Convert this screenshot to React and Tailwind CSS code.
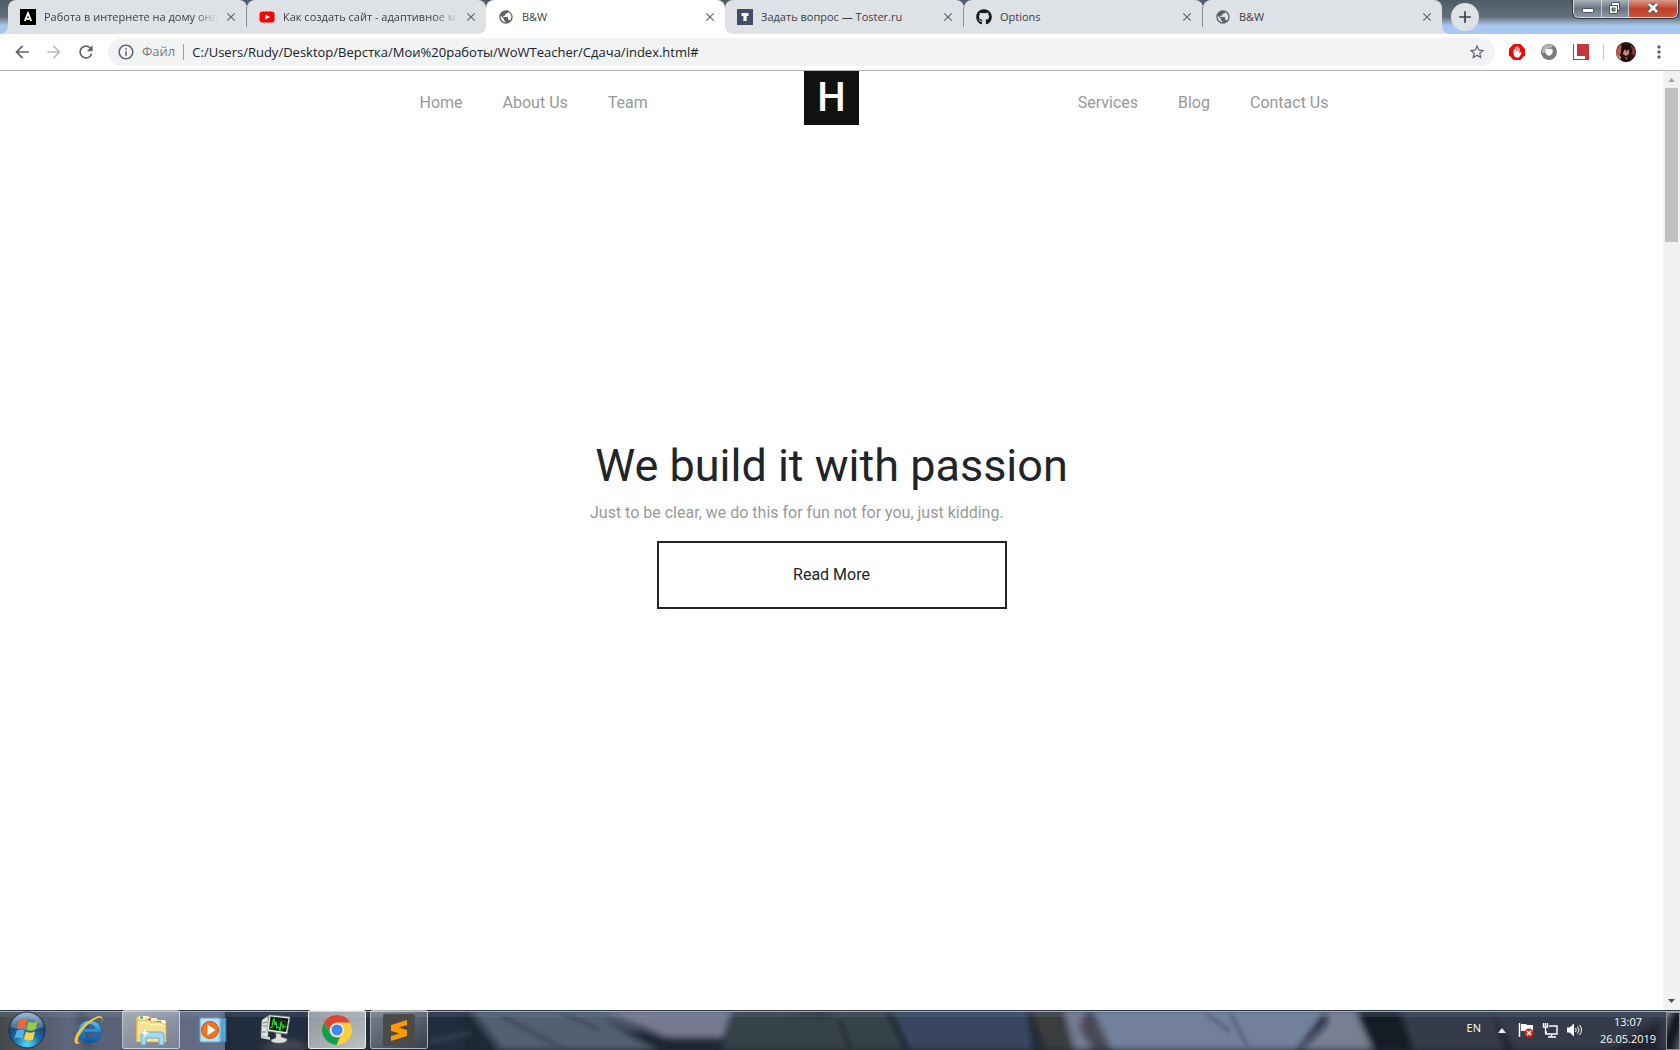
import {
  MdAdd,
  MdArrowBack,
  MdArrowForward,
  MdClose,
  MdInfoOutline,
  MdMoreVert,
  MdPublic,
  MdRefresh,
  MdStarBorder,
} from "react-icons/md";
import { FaGithub } from "react-icons/fa";

const tabs = [
  { id: 1, title: "Работа в интернете на дому онл", icon: "author", line: true, fade: true },
  { id: 2, title: "Как создать сайт - адаптивное м", icon: "youtube", corner: "rounded-br-lg", fade: true },
  { id: 3, title: "B&W", icon: "globe", active: true },
  { id: 4, title: "Задать вопрос — Toster.ru", icon: "toster", corner: "rounded-bl-lg", line: true },
  { id: 5, title: "Options", icon: "github", line: true },
  { id: 6, title: "B&W", icon: "globe" },
];

const leftLinks = ["Home", "About Us", "Team"];
const rightLinks = ["Services", "Blog", "Contact Us"];

function Favicon({ name }) {
  if (name === "globe") return <MdPublic className="size-4 text-[#5f6368]" />;
  if (name === "github") return <FaGithub className="size-4 text-[#191717]" />;
  if (name === "youtube") {
    return (
      <svg viewBox="0 0 16 16" className="size-4">
        <rect x="0.5" y="2.5" width="15" height="11" rx="3" fill="#f00" />
        <path d="M6.3 5.4 11 8l-4.7 2.6z" fill="#fff" />
      </svg>
    );
  }
  if (name === "toster") {
    return (
      <svg viewBox="0 0 16 16" className="size-4">
        <rect width="16" height="16" fill="#454a67" />
        <path d="M4.5 4h7v3H9.7v5H6.4V7H4.5z" fill="#fff" />
      </svg>
    );
  }
  return (
    <svg viewBox="0 0 16 16" className="size-4">
      <rect width="16" height="16" fill="#000" />
      <path d="M4.8 12 8 4.2l3.2 7.8M5.8 9.8h4.4" fill="none" stroke="#fff" strokeWidth="1.8" />
    </svg>
  );
}

function Tab({ tab }) {
  return (
    <div
      className={`h-full min-w-0 flex-1 max-w-[239px] ${
        tab.corner ? "bg-linear-to-b from-transparent from-50% to-white to-50%" : ""
      }`}
    >
      <div
        className={`flex h-full items-center rounded-t-lg pl-3 ${
          tab.active ? "bg-white" : "bg-[#dee1e6]"
        } ${tab.corner || ""}`}
      >
        <button className="flex flex-1 min-w-0 items-center gap-2 text-left">
          <span className="shrink-0">
            <Favicon name={tab.icon} />
          </span>
          <span
            className={`flex-1 overflow-hidden whitespace-nowrap text-[11px] leading-4 text-[#3c4043] ${
              tab.fade ? "[mask-image:linear-gradient(to_right,#000_86%,transparent)]" : ""
            }`}
          >
            {tab.title}
          </span>
        </button>
        <button aria-label="Close tab" className="pl-[6px] pr-2 text-[#5f6368]">
          <MdClose className="size-[14px]" />
        </button>
        {tab.line && <span className="h-5 w-px bg-[#8a8f95]" />}
      </div>
    </div>
  );
}

function WindowButtons() {
  return (
    <div className="flex h-[18px] mr-[2px] rounded-b-md overflow-hidden border border-t-0 border-[#d5dbe2] shadow-[0_0_0_1px_#2f3640]">
      <button
        aria-label="Minimize"
        className="w-7 border-r border-[#c5ccd4] bg-linear-to-b from-[#aab2bb] via-[#6c7681] to-[#8d98a6]"
      >
        <svg viewBox="0 0 28 17" className="w-7 h-[17px]">
          <rect x="8.5" y="8.5" width="11" height="4" rx="1" fill="#fff" stroke="#4b5060" />
        </svg>
      </button>
      <button
        aria-label="Restore"
        className="w-[27px] border-r border-[#c5ccd4] bg-linear-to-b from-[#aab2bb] via-[#6c7681] to-[#8d98a6]"
      >
        <svg viewBox="0 0 26 17" className="w-[26px] h-[17px]">
          <path d="M9.500 2.500h8v8h-8z" fill="#fff" stroke="#4b5060" />
          <path d="M7.500 5.500h8v8h-8z" fill="#fff" stroke="#4b5060" />
          <path d="M10 8h3v3h-3z" fill="#8d98a6" stroke="#4b5060" />
        </svg>
      </button>
      <button aria-label="Close" className="w-12 bg-linear-to-b from-[#d99a8c] via-[#c1402a] to-[#c8543a]">
        <svg viewBox="0 0 48 17" className="w-12 h-[17px]">
          <path d="m20 4 8 8m0-8-8 8" stroke="#4b5060" strokeWidth="4.6" />
          <path d="m20 4 8 8m0-8-8 8" stroke="#fff" strokeWidth="2.8" />
        </svg>
      </button>
    </div>
  );
}

function TabStrip() {
  return (
    <div className="flex h-[34px] items-start bg-linear-to-b from-[#4f5b66] from-0% via-[#647079] via-50% to-[#a9c8f0] to-75%">
      <svg viewBox="0 0 8 8" className="size-2 shrink-0 self-end">
        <path d="M8 0v8H0a8 8 0 0 0 8-8z" fill="#dee1e6" />
      </svg>
      <div className="flex h-full min-w-0 flex-1">
        {tabs.map((tab) => (
          <Tab key={tab.id} tab={tab} />
        ))}
        <svg viewBox="0 0 8 8" className="size-2 shrink-0 self-end">
          <path d="M0 0v8h8a8 8 0 0 1-8-8z" fill="#dee1e6" />
        </svg>
        <button
          aria-label="New tab"
          className="mt-[3px] ml-px size-7 shrink-0 rounded-full bg-[#dee1e6] flex items-center justify-center text-[#3c4043]"
        >
          <MdAdd className="size-5" />
        </button>
      </div>
      <WindowButtons />
    </div>
  );
}

function Toolbar() {
  return (
    <div className="flex h-[37px] items-center border-b border-[#b3b3b3] bg-white pl-3 pr-[11px] text-[#5f6368]">
      <div className="flex items-center gap-3">
        <button aria-label="Back">
          <MdArrowBack className="size-5" />
        </button>
        <button aria-label="Forward" className="text-[#babcbe]">
          <MdArrowForward className="size-5" />
        </button>
        <button aria-label="Reload">
          <MdRefresh className="size-5" />
        </button>
      </div>
      <div className="ml-3 flex h-7 flex-1 items-center rounded-full bg-[#f1f3f4] px-[9px]">
        <MdInfoOutline className="size-[18px]" />
        <label htmlFor="address" className="ml-[7px] text-[13px] text-[#777b80]">
          Файл
        </label>
        <span className="mx-2 h-4 w-px bg-[#9aa0a6]" />
        <input
          id="address"
          className="flex-1 bg-transparent text-[13px] leading-5 text-[#202124] outline-none"
          defaultValue="C:/Users/Rudy/Desktop/Верстка/Мои%20работы/WoWTeacher/Сдача/index.html#"
        />
        <button aria-label="Bookmark">
          <MdStarBorder className="size-[18px]" />
        </button>
      </div>
      <div className="ml-[14px] flex items-center gap-4">
        <button aria-label="AdBlock">
          <svg viewBox="0 0 16 16" className="size-4">
            <path d="M4.7 0h6.6L16 4.7v6.6L11.3 16H4.7L0 11.3V4.7z" fill="#e40d0d" />
            <path
              d="M4.6 6.2v3.4c0 2.6 1.5 4 3.6 4 1.8 0 2.7-1 3.4-2.6l1-2.6-.9-.3-1.2 1.5V3.6H9.4v3.8h-.5V2.3H7.7v5.1h-.5V3.2H6.1v4.4h-.4V5H4.6z"
              fill="#fff"
            />
          </svg>
        </button>
        <button aria-label="Browser proxy">
          <svg viewBox="0 0 16 16" className="size-4">
            <circle cx="8" cy="8" r="8" fill="#7b7b7b" />
            <path d="M1 9A7 7 0 0 1 12 2L9 4.5a4 4 0 0 0-5 4z" fill="#b5b5b5" />
            <path d="M8 12C4 10.500 3.600 7 5 4.500c1 .8 2 .8 3 .2 1 .6 2 .6 3-.2 1.400 2.500 1 6-3 7.500z" fill="#fff" />
          </svg>
        </button>
        <button aria-label="Bookmarks manager">
          <svg viewBox="0 0 16 16" className="size-4">
            <rect width="16" height="16" fill="#c5353a" />
            <path d="M1 0h3v12h8v3H1z" fill="#fff" />
          </svg>
        </button>
      </div>
      <span className="ml-[14px] h-4 w-px bg-[#c8cacc]" />
      <button aria-label="Profile" className="ml-3">
        <svg viewBox="0 0 20 20" className="size-5">
          <clipPath id="avatar">
            <circle cx="10" cy="10" r="10" />
          </clipPath>
          <g clipPath="url(#avatar)">
            <rect width="20" height="20" fill="#2a1416" />
            <path d="M0 8 5 2l1 6-3 7-3 1z" fill="#b5603f" />
            <path d="m15 3 5 5-2 6-3-3z" fill="#8a2f2c" />
            <path d="M7 6q3-3 6 0v6l-3 2-3-2z" fill="#c08a76" />
            <path d="M5 10Q5 2 11 3t5 9l-2-3-2-2-1 3-2-3-2 4z" fill="#1c0b10" />
            <path d="m5 20 3-6 2 2 3-2 3 6z" fill="#15090d" />
            <path d="m9 15 1 4 2-4z" fill="#c42329" />
            <path d="m2 13 3 2-1 3z" fill="#e2b49b" />
          </g>
        </svg>
      </button>
      <button aria-label="Menu" className="ml-[13px]">
        <MdMoreVert className="size-5" />
      </button>
    </div>
  );
}

function Site() {
  return (
    <main className="flex flex-1 flex-col bg-white font-['Roboto',sans-serif] text-base text-[#212529]">
      <header className="mx-auto grid w-full max-w-[1140px] grid-cols-[1fr_auto_1fr] text-[#999]">
        <nav className="flex items-center gap-10 pl-[158px] pt-[10px]">
          {leftLinks.map((link) => (
            <a key={link} href="#">
              {link}
            </a>
          ))}
        </nav>
        <a
          href="#"
          className="flex h-[54px] w-[55px] items-center justify-center bg-[#111] text-[40px] leading-none font-medium text-white"
        >
          H
        </a>
        <nav className="flex items-center justify-end gap-10 pr-[73px] pt-[10px]">
          {rightLinks.map((link) => (
            <a key={link} href="#">
              {link}
            </a>
          ))}
        </nav>
      </header>

      <section className="flex flex-1 items-center justify-center pb-[88px]">
        <div className="w-[483px]">
          <h1 className="text-center text-[45px] leading-[54px] whitespace-nowrap">We build it with passion</h1>
          <p className="mt-2 leading-6 text-[#999]">
            Just to be clear, we do this for fun not for you, just kidding.
          </p>
          <button className="mx-auto mt-4 block h-[68px] w-[350px] border-2 border-[#212529]">
            Read More
          </button>
        </div>
      </section>
    </main>
  );
}

function Scrollbar() {
  return (
    <div className="flex w-[17px] flex-col items-center bg-[#f1f1f1]">
      <svg viewBox="0 0 17 17" className="size-[17px]">
        <path d="m5 11 3.5-4L12 11z" fill="#a3a3a3" />
      </svg>
      <div className="h-[154px] w-[13px] bg-[#c1c1c1]" />
      <svg viewBox="0 0 17 17" className="mt-auto size-[17px]">
        <path d="m5 6 3.5 4L12 6z" fill="#505050" />
      </svg>
    </div>
  );
}

/* Blurred desktop wallpaper seen through the taskbar glass */
function Wallpaper() {
  return (
    <svg viewBox="0 0 1680 40" preserveAspectRatio="none" className="absolute inset-0 size-full">
      <defs>
        <filter id="soft" x="-5%" y="-20%" width="110%" height="140%">
          <feGaussianBlur stdDeviation="3" />
        </filter>
        <filter id="glass" x="0" y="0" width="1" height="1">
          <feGaussianBlur stdDeviation="2" />
        </filter>
        <linearGradient id="left" x1="0" x2="1">
          <stop offset="0" stopColor="#45484a" />
          <stop offset="0.1" stopColor="#4f5359" />
          <stop offset="0.3" stopColor="#5d667c" />
          <stop offset="0.5" stopColor="#596174" />
          <stop offset="1" stopColor="#66708a" />
        </linearGradient>
      </defs>
      <rect width="1680" height="40" fill="#1e2936" />
      <rect width="225" height="40" fill="url(#left)" />
      <g filter="url(#soft)">
        <path d="M76 0h10l8 40H84z" fill="#4a5160" />
        <path d="m225 0 6 40h230V0z" fill="#222d3d" />
        <path d="M260 40q30-20 50 0z" fill="#4b4a54" />
        <path d="M470 0h130l80 40H500z" fill="#536070" />
        <path d="M600 0h133l-10 28h-55z" fill="#777a8f" />
        <path d="m600 6 30 14 40 7h50l-2 13h-60l-25-12z" fill="#1f2634" />
        <path d="M735 0h150l20 40H722z" fill="#34424a" />
        <path d="m780 0 40 8 20-8z" fill="#222e36" />
        <path d="m890 0 18 40h125L1027 0z" fill="#37475f" />
        <path d="m1027 0 16 40h30L1064 0z" fill="#3b3e3c" />
        <path d="m1064 0 10 40h34L1085 0z" fill="#737c90" />
        <path d="m1085 0-6 18 14 22h20L1090 0z" fill="#4a4957" />
        <path d="m1092 0 20 40h185l30-40z" fill="#72809a" />
        <path d="m1300 40 27-26V0h28l18 40z" fill="#787f90" />
        <path d="m1355 0 18 40h42l-14-40z" fill="#141c25" />
        <path d="m1400 0 14 40h270V0z" fill="#363b48" />
        <path d="m1490 0 25 40h-10zm120 40 50-30v30z" fill="#20242e" />
      </g>
      <g fill="none" strokeWidth="3" filter="url(#glass)">
        <path d="m470 0 30 40M500 5l65 35M560 2l40 18M430 32l40-9" stroke="#3a4452" />
        <path d="m1205 2 25 20M1230 3l18 35M1326 0l1 14-25 24" stroke="#545d76" />
        <path d="m840 12 10 25M888 0l20 40M1028 0l16 40" stroke="#20272f" />
      </g>
      <rect y="2" width="1680" height="5" fill="#8fa8c8" opacity="0.15" />
      <rect width="1680" height="1" fill="#2b3744" />
      <rect y="1" width="1680" height="1" fill="#a1b1c2" />
    </svg>
  );
}

function StartOrb() {
  return (
    <svg viewBox="0 0 38 38" className="size-[38px]">
      <defs>
        <radialGradient id="orb" cx="0.5" cy="0.9" r="0.9">
          <stop offset="0" stopColor="#4fd8ff" />
          <stop offset="0.4" stopColor="#1d6ea6" />
          <stop offset="0.7" stopColor="#1b4472" />
          <stop offset="1" stopColor="#a9c4dc" />
        </radialGradient>
      </defs>
      <circle cx="19" cy="19" r="18" fill="url(#orb)" stroke="#152c48" />
      <path d="M3 16a16.5 16.5 0 0 1 32 0q-16 6-32 0z" fill="#fff" opacity="0.25" />
      <path d="M11 10q4-3 8-.5L17 18q-4-2-8 0z" fill="#ee6a32" />
      <path d="M20.5 10.500q4 2.500 9-.5l-2 8.500q-5 2.500-9 0z" fill="#9acb3c" />
      <path d="M8.500 20q4-2.500 8-.5l-2 8q-4-2-8 0z" fill="#57aee8" />
      <path d="M18 20.500q4 2.500 9 0l-2 8q-5 2.500-9-.5z" fill="#ffd23e" />
    </svg>
  );
}

function ExplorerE() {
  return (
    <svg viewBox="0 0 32 32" className="size-8">
      <defs>
        <linearGradient id="ie" x1="0" x2="0" y1="0" y2="1">
          <stop offset="0" stopColor="#6cc4f2" />
          <stop offset="0.5" stopColor="#1f86d4" />
          <stop offset="1" stopColor="#0a4f9c" />
        </linearGradient>
      </defs>
      <path
        d="M28.5 18.500H11.500c.5 3.500 2.500 5 5.500 5 2 0 3.500-.8 4.500-2.200h6.500c-1.800 5-6 7.700-11.200 7.700C10 29 5 24.500 5 17.800S10 6.500 17 6.500s12 5 11.500 12zM22 14.500c-.5-2.500-2.200-4-5-4s-4.700 1.500-5.200 4z"
        fill="url(#ie)"
        stroke="#135a9c"
        strokeWidth="0.6"
      />
      <path
        d="M28.500 9C31 4 29 .8 24 2.500 14 6 3 17 1.500 25.500c-.7 4 2 5.500 6.500 3.200-3 .6-4-1-3-4C7.500 17 17 7 25 4c3.500-1.200 5 .5 3.500 5z"
        fill="#f8c62d"
      />
    </svg>
  );
}

function FolderIcon() {
  return (
    <svg viewBox="0 0 32 32" className="size-8">
      <path d="M1 4q0-1 1-1h13l2 3h14v22H1z" fill="#e6c763" />
      <path d="M4 2h9l2 2h-4v2H3z" fill="#fdf6d8" />
      <path d="M12 4h9l2 2h-4v2h-7z" fill="#fdf6d8" />
      <path d="M20 6h9l2 2v2H20z" fill="#fdf6d8" />
      <path d="M5 2.500h3v2H5z" fill="#3aa530" />
      <path d="M13 4.500h3v2h-3z" fill="#dd3c2e" />
      <path d="M21 7h5v2h-5z" fill="#3b84d4" />
      <path d="M2 6h12l2 2h9l2 2h4v18H2z" fill="#f5e394" stroke="#c9a94c" strokeWidth="0.7" />
      <path d="M4 9h10M15 11h14" stroke="#fff8cc" />
      <path d="M6 31V21q0-3 3-3h17q3 0 3 3v10h-5v-7H11v7z" fill="#a5dbf2" stroke="#5a9cc4" strokeWidth="0.8" />
      <path d="m10 14 1 4 4 1-4 1-1 4-1-4-4-1 4-1z" fill="#fff" />
    </svg>
  );
}

function MediaPlayer() {
  return (
    <svg viewBox="0 0 32 32" className="size-8">
      <path d="M10 4h19v24H10z" fill="#5fa8d6" stroke="#2e729f" />
      <path d="M7 4h18v24H7z" fill="#87c4e8" stroke="#4b8ab3" />
      <path d="M3 4h18l2 1v23H3z" fill="#b7dff5" stroke="#6ba7cc" />
      <circle cx="13" cy="16" r="8.500" fill="#ee7420" stroke="#c95410" />
      <path d="m10.500 10.500 8 5.500-8 5.500z" fill="#fff" />
    </svg>
  );
}

function PerfMonitor() {
  return (
    <svg viewBox="0 0 32 32" className="size-8">
      <path d="m3 6 6-4v21l-7-1z" fill="#e2e3e1" stroke="#8d908e" strokeWidth="0.6" />
      <path d="M4 9l4-1M4 12h4M3 18h4" stroke="#767b78" />
      <path d="m10 1 21 2-3 17-20-3z" fill="#eceee9" stroke="#8d908e" strokeWidth="0.7" />
      <path d="m11.500 2.500 18 2-2.500 13.500-17-2.500z" fill="#0c220f" />
      <path d="M11 9l18 2M12 6l17 2M16 4l-2 12M22 5l-2 12" stroke="#1a6b22" strokeWidth="0.5" />
      <path d="m11 14 2-1 1-6 1-2 1 6 1-3 1 6 2-1 1 4 1-9 2 6 1-2 2 1" fill="none" stroke="#2fd234" strokeWidth="1.2" />
      <path d="m17 19 5 1v3l6 2q0 4-8 4t-8-3l5-2z" fill="#dadcd8" stroke="#9a9c99" strokeWidth="0.5" />
      <path d="m2 22 9 1v3l-9-2z" fill="#d1d3cf" />
    </svg>
  );
}

function ChromeIcon() {
  return (
    <svg viewBox="0 0 32 32" className="size-8">
      <circle cx="16" cy="16" r="15" fill="#ffcd40" />
      <path d="M3 8.500A15 15 0 0 1 29 8.500H16A7.500 7.500 0 0 0 9.500 19.700z" fill="#db4437" />
      <path d="M3 8.500 9.500 19.700A7.500 7.500 0 0 0 19 22.800L15.500 31A15 15 0 0 1 3 8.500z" fill="#0f9d58" />
      <circle cx="16" cy="16" r="7" fill="#f1f1f1" />
      <circle cx="16" cy="16" r="5.500" fill="#4285f4" />
    </svg>
  );
}

function SublimeIcon() {
  return (
    <svg viewBox="0 0 32 32" className="size-8">
      <rect width="32" height="32" rx="2" fill="#4a4a4a" />
      <path d="m8 11 16-5v5l-8.500 2.600L24 16v6L8 27v-5l8.500-2.600L8 17z" fill="#ff9800" />
    </svg>
  );
}

const taskbarApps = [
  { name: "Internet Explorer", Icon: ExplorerE, frame: "border-transparent" },
  {
    name: "Explorer",
    Icon: FolderIcon,
    frame: "border-white/50 bg-linear-to-br from-white/45 to-white/15",
  },
  { name: "Media Player", Icon: MediaPlayer, frame: "border-transparent" },
  { name: "Performance Monitor", Icon: PerfMonitor, frame: "border-transparent" },
  {
    name: "Chrome",
    Icon: ChromeIcon,
    frame: "border-white/80 bg-linear-to-br from-white/50 to-white/70",
  },
  {
    name: "Sublime Text",
    Icon: SublimeIcon,
    frame: "border-white/50 bg-linear-to-br from-white/40 to-white/10",
  },
];

function Tray() {
  return (
    <div className="ml-auto flex items-center text-[11px] text-white">
      <span className="pb-1">EN</span>
      <button aria-label="Show hidden icons" className="ml-[17px]">
        <svg viewBox="0 0 8 5" className="h-[5px] w-2">
          <path d="m0 5 4-5 4 5z" fill="#e8ecf2" />
        </svg>
      </button>
      <svg viewBox="0 0 16 16" className="ml-3 size-4">
        <path d="M1.500 1v14" stroke="#fff" strokeWidth="1.5" />
        <path d="M3 2h5l1 1h6v7H8L7 9H3z" fill="#fff" />
        <circle cx="11" cy="11" r="4.500" fill="#d7251d" />
        <path d="m9 9 4 4m0-4-4 4" stroke="#fff" strokeWidth="1.5" />
      </svg>
      <svg viewBox="0 0 16 16" className="ml-2 size-4" fill="none" stroke="#fff" strokeWidth="1.4">
        <path d="M7 4h8v8H4V9M9.500 12v3M6 15h8" />
        <path d="M1.500 1v4h4V1M3.500 5v6H5M3.500 1v3" />
      </svg>
      <svg viewBox="0 0 16 16" className="ml-2 size-4">
        <path d="M1 5.500h2.500L8 1.500v13l-4.500-4H1z" fill="#fff" />
        <path d="M9.500 6q1.500 2 0 4M11.500 4.500q3 3.500 0 7M13.500 3q4 5 0 10" fill="none" stroke="#fff" />
      </svg>
      <time className="ml-[17px] w-[58px] text-center leading-[17px]">
        13:07
        <br />
        26.05.2019
      </time>
      <button
        aria-label="Show desktop"
        className="ml-[9px] mt-px h-[38px] w-[14px] border border-[#8d9197] bg-linear-to-br from-white/30 via-black/60 to-white/20"
      />
    </div>
  );
}

function Taskbar() {
  return (
    <footer className="relative h-10 overflow-hidden bg-[#1e2936]">
      <Wallpaper />
      <div className="relative flex h-full items-center pl-2">
        <button aria-label="Start" className="mr-[14px]">
          <StartOrb />
        </button>
        <div className="flex h-full flex-1 gap-1">
          {taskbarApps.map(({ name, Icon, frame }) => (
            <button
              key={name}
              aria-label={name}
              className={`flex h-[39px] w-[58px] items-center justify-center rounded-[3px] border ${frame}`}
            >
              <Icon />
            </button>
          ))}
          <Tray />
        </div>
      </div>
    </footer>
  );
}

export default function App() {
  return (
    <div className="flex min-h-screen flex-col bg-white font-['Open_Sans','Noto_Sans',sans-serif]">
      <TabStrip />
      <Toolbar />
      <div className="flex flex-1">
        <Site />
        <Scrollbar />
      </div>
      <Taskbar />
    </div>
  );
}
